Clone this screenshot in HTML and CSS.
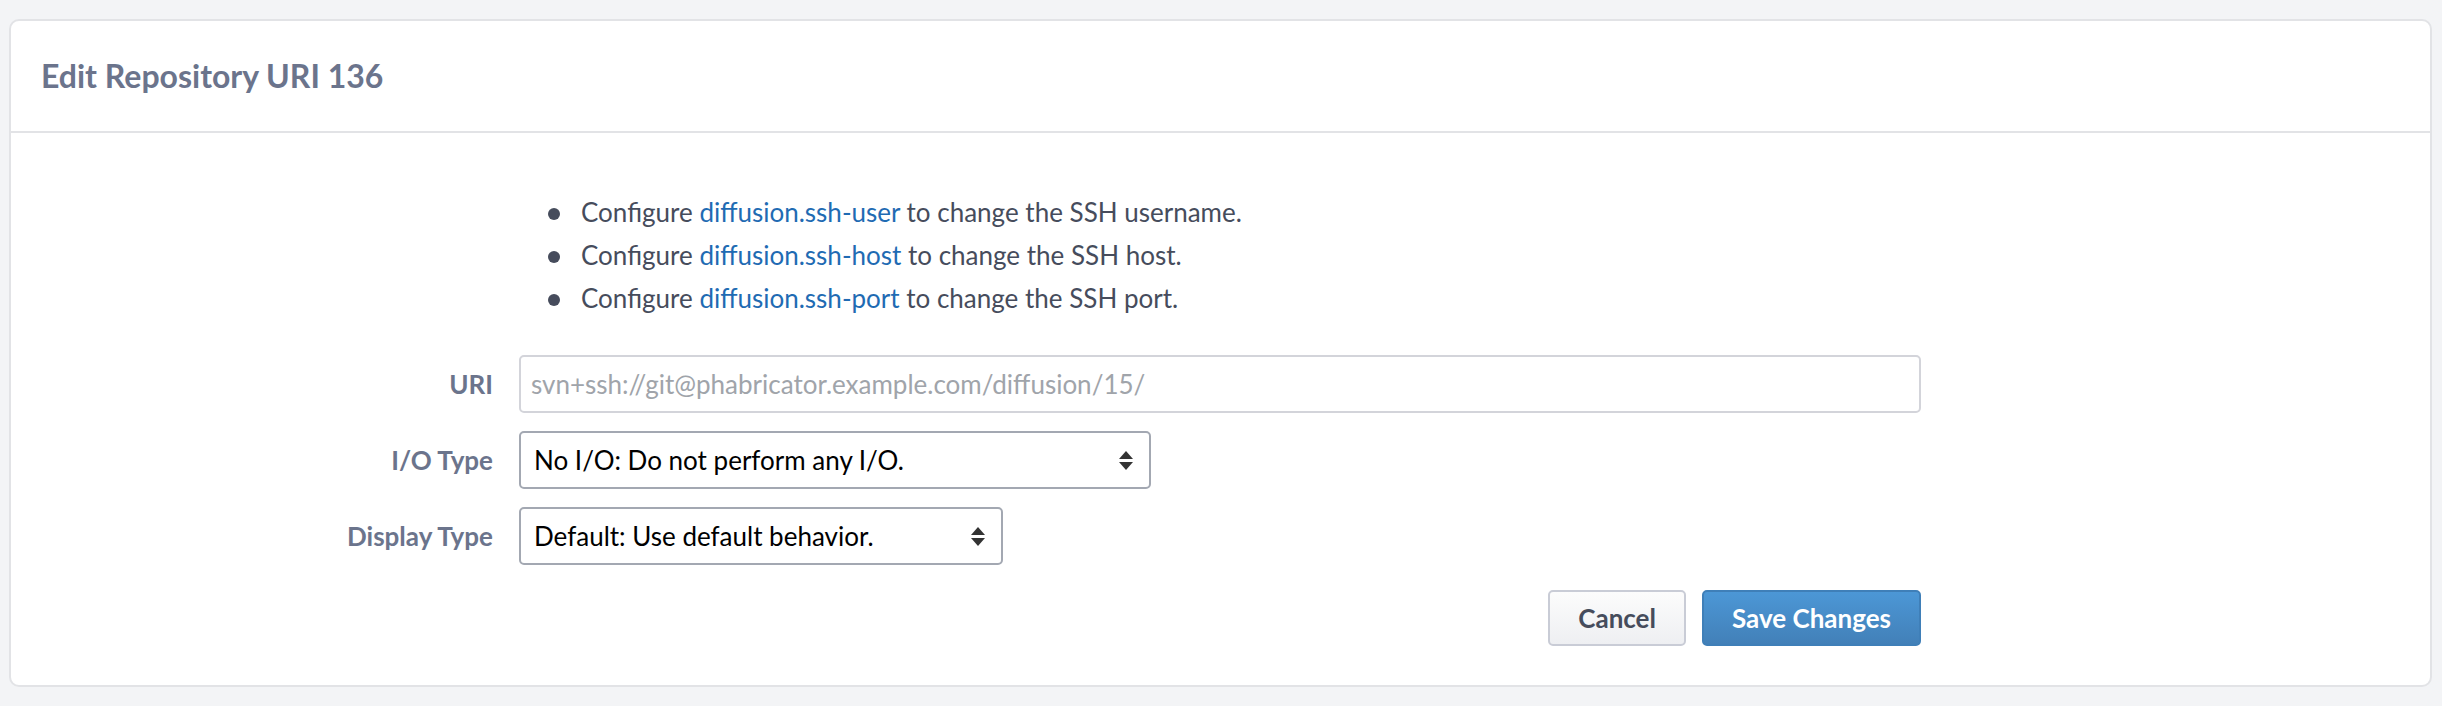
FILE: index.html
```html
<!DOCTYPE html>
<html lang="en">
<head>
<meta charset="utf-8">
<title>Edit Repository URI 136</title>
<link rel="stylesheet" href="styles.css">
</head>
<body>
<div class="page">
  <div class="card">
    <div class="card-header">
      <h1 class="title">Edit Repository URI 136</h1>
    </div>
    <div class="card-body">
      <ul class="instructions">
        <li>Configure <a class="link" href="#">diffusion.ssh-user</a> to change the SSH username.</li>
        <li>Configure <a class="link" href="#">diffusion.ssh-host</a> to change the SSH host.</li>
        <li>Configure <a class="link" href="#">diffusion.ssh-port</a> to change the SSH port.</li>
      </ul>
      <form class="form">
        <label class="label">URI</label>
        <div class="control">
          <input class="text-input" type="text" value="svn+ssh://git@phabricator.example.com/diffusion/15/" readonly>
        </div>
        <label class="label">I/O Type</label>
        <div class="control">
          <div class="select-wrap select-io">
            <select class="select"><option>No I/O: Do not perform any I/O.</option></select>
            <svg class="select-arrow" width="14" height="19" viewBox="0 0 14 19"><path d="M7 0 L14 8 L0 8 Z M0 11 L14 11 L7 19 Z" fill="#333"/></svg>
          </div>
        </div>
        <label class="label">Display Type</label>
        <div class="control">
          <div class="select-wrap select-display">
            <select class="select"><option>Default: Use default behavior.</option></select>
            <svg class="select-arrow" width="14" height="19" viewBox="0 0 14 19"><path d="M7 0 L14 8 L0 8 Z M0 11 L14 11 L7 19 Z" fill="#333"/></svg>
          </div>
        </div>
        <div class="spacer"></div>
        <div class="actions">
          <button type="button" class="btn btn-grey">Cancel</button>
          <button type="button" class="btn btn-blue">Save Changes</button>
        </div>
      </form>
    </div>
  </div>
</div>
</body>
</html>
```

FILE: styles.css
```css
* { box-sizing: border-box; }
html, body { margin: 0; padding: 0; }
body {
  background: #f3f4f6;
  font-family: Lato, "Noto Sans", sans-serif;
  color: #464c5c;
}
.page {
  padding: 19px 10px 18px 9px;
}
.card {
  background: #fff;
  border: 2px solid #e2e3e6;
  border-radius: 10px;
}
.card-header {
  padding: 35px 30px;
  border-bottom: 2px solid #e2e3e6;
}
.title {
  margin: 0;
  font-size: 32px;
  line-height: 40px;
  font-weight: 700;
  color: #6b748c;
}
.card-body {
  padding: 58px 0 39px 0;
}
.instructions {
  list-style: none;
  margin: 0 0 35px 537px;
  padding: 0;
  font-size: 26px;
  line-height: 43px;
}
.instructions li::before {
  content: "";
  display: inline-block;
  width: 12px;
  height: 12px;
  border-radius: 50%;
  background: #464c5c;
  margin-right: 21px;
  vertical-align: 2px;
}
.link {
  color: #1f6bb3;
  text-decoration: none;
}
.form {
  display: grid;
  grid-template-columns: 482px 1402px;
  column-gap: 26px;
  row-gap: 18px;
  align-items: center;
}
.label {
  text-align: right;
  font-size: 26px;
  font-weight: 700;
  color: #6b748c;
  line-height: 58px;
}
.text-input {
  display: block;
  width: 100%;
  height: 58px;
  border: 2px solid #d3d4da;
  border-radius: 5px;
  padding: 0 10px;
  font-family: Lato, sans-serif;
  font-size: 26px;
  color: #a0a4aa;
  background: #fff;
  outline: none;
}
.select-wrap {
  position: relative;
}
.select-io { width: 632px; }
.select-display { width: 484px; }
.select {
  display: block;
  width: 100%;
  height: 58px;
  -webkit-appearance: none;
  appearance: none;
  border: 2px solid #a3a8b2;
  border-radius: 5px;
  padding: 0 50px 0 13px;
  font-family: Lato, sans-serif;
  font-size: 26px;
  color: #000;
  background: #fff;
}
.select-arrow {
  position: absolute;
  right: 18px;
  top: 20px;
  pointer-events: none;
}
.actions {
  display: flex;
  justify-content: flex-end;
  gap: 16px;
  margin-top: 7px;
}
.btn {
  height: 56px;
  padding: 0 28px;
  border-radius: 5px;
  font-family: Lato, sans-serif;
  font-size: 26px;
  font-weight: 700;
  cursor: pointer;
}
.btn-grey {
  border: 2px solid #c9ccd6;
  background: linear-gradient(to bottom, #fcfcfc, #eeeff2);
  color: #464c5c;
}
.btn-blue {
  border: 2px solid #3f7fb8;
  background: linear-gradient(to bottom, #4c97d6, #4280b8);
  color: #fff;
}
```
